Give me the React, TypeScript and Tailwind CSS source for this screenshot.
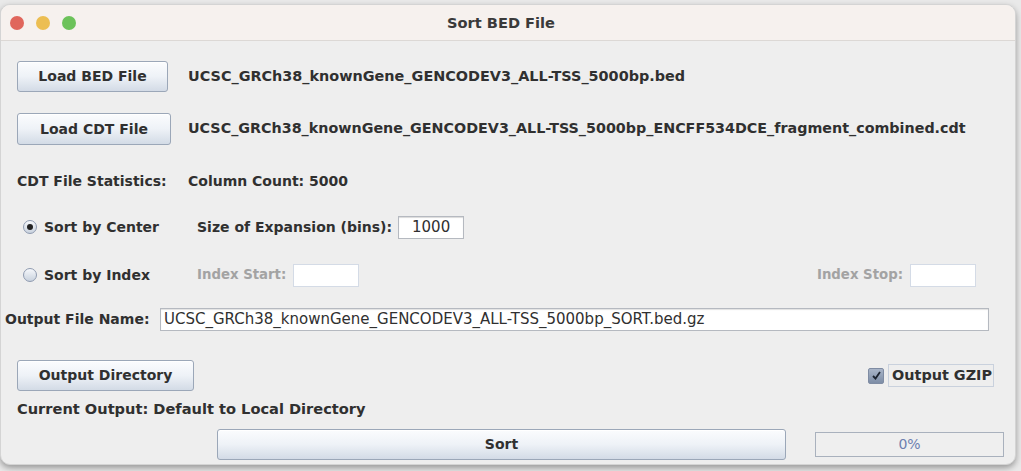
import React from 'react'

const btn =
  'flex items-center justify-center rounded-[3px] border border-[#9ba7b8] bg-gradient-to-b from-[#fbfcfe] via-[#eef2f7] to-[#d3dbe6] text-[14px] font-bold text-[#303030] shadow-[inset_0_1px_0_#ffffff]'

function Radio({ checked }: { checked: boolean }) {
  return (
    <span className="flex h-[14px] w-[14px] items-center justify-center rounded-full border border-[#8f9bb0] bg-gradient-to-b from-[#f6f8fb] to-[#c9d2de]">
      {checked && <span className="h-[6px] w-[6px] rounded-full bg-[#222]" />}
    </span>
  )
}

export default function App() {
  return (
    <div className="h-[471px] w-[1021px] overflow-hidden bg-[#e9e9e9] pt-[4px] font-['DejaVu_Sans',sans-serif] text-[#303030]">
      <div className="flex h-[461px] w-[1016px] flex-col overflow-hidden rounded-[10px] border border-[#d4d4d4] bg-[#eeeeee] shadow-[0_3px_6px_rgba(0,0,0,0.35)]">
        {/* Title bar */}
        <div className="relative flex h-[36px] shrink-0 items-center justify-center border-b border-[#dcd8d5] bg-[#f6f1ee] pr-[14px]">
          <div className="absolute left-[9px] top-[11px] flex gap-[12px]">
            <span className="h-[14px] w-[14px] rounded-full bg-[#e0665c]" />
            <span className="h-[14px] w-[14px] rounded-full bg-[#ecbe52]" />
            <span className="h-[14px] w-[14px] rounded-full bg-[#6cc25a]" />
          </div>
          <span className="text-[14.6px] font-bold text-[#3a3a3a]">Sort BED File</span>
        </div>

        {/* Body */}
        <div className="flex flex-col pt-[20px] text-[14px] font-bold">
          <div className="flex h-[31px] items-center pl-[16px]">
            <div className={`${btn} h-[31px] w-[151px]`}>Load BED File</div>
            <span className="ml-[20px] text-[14.4px]">UCSC_GRCh38_knownGene_GENCODEV3_ALL-TSS_5000bp.bed</span>
          </div>

          <div className="mt-[21px] flex h-[32px] items-center pl-[16px]">
            <div className={`${btn} h-[32px] w-[154px]`}>Load CDT File</div>
            <span className="ml-[17px] text-[14.3px]">UCSC_GRCh38_knownGene_GENCODEV3_ALL-TSS_5000bp_ENCFF534DCE_fragment_combined.cdt</span>
          </div>

          <div className="mt-[26px] flex h-[20px] items-center pl-[16px]">
            <span className="w-[171px]">CDT File Statistics:</span>
            <span>Column Count: 5000</span>
          </div>

          <div className="mt-[24px] flex h-[24px] items-center pl-[22px]">
            <Radio checked />
            <span className="ml-[7px] w-[153px]">Sort by Center</span>
            <span>Size of Expansion (bins):</span>
            <div className="ml-[6px] flex h-[23px] w-[66px] items-center justify-center border border-[#b5b9c0] bg-white text-[15px] font-normal shadow-[inset_0_1px_1px_rgba(0,0,0,0.15)]">
              1000
            </div>
          </div>

          <div className="mt-[24px] flex h-[24px] items-center pl-[22px]">
            <Radio checked={false} />
            <span className="ml-[7px] w-[153px]">Sort by Index</span>
            <span className="text-[13.3px] text-[#a3a3a3]">Index Start:</span>
            <div className="ml-[7px] h-[23px] w-[66px] border border-[#d4dbe6] bg-white" />
            <span className="ml-auto text-[13.3px] text-[#a3a3a3]">Index Stop:</span>
            <div className="ml-[7px] mr-[39px] h-[23px] w-[66px] border border-[#d4dbe6] bg-white" />
          </div>

          <div className="mt-[20px] flex h-[24px] items-center pl-[4px]">
            <span className="w-[155px]">Output File Name:</span>
            <div className="flex h-[23px] w-[829px] items-center border border-[#b5b9c0] bg-white pl-[3px] text-[15px] font-normal shadow-[inset_0_1px_1px_rgba(0,0,0,0.12)]">
              UCSC_GRCh38_knownGene_GENCODEV3_ALL-TSS_5000bp_SORT.bed.gz
            </div>
          </div>

          <div className="mt-[29px] flex h-[31px] items-center pl-[16px]">
            <div className={`${btn} h-[31px] w-[177px]`}>Output Directory</div>
            <div className="ml-auto mr-[21px] flex items-center">
              <span className="flex h-[16px] w-[16px] items-center justify-center rounded-[2px] border border-[#7f8ca3] bg-gradient-to-b from-[#a9b5c8] to-[#7d8da6]">
                <svg width="11" height="11" viewBox="0 0 11 11">
                  <path d="M2 6 L4.5 8.5 L9 2" fill="none" stroke="#1c2430" strokeWidth="1.8" />
                </svg>
              </span>
              <span className="ml-[4px] flex h-[23px] items-center border border-[#c9d1dd] pl-[3px] pr-[1px] text-[14.4px]">Output GZIP</span>
            </div>
          </div>

          <div className="mt-[8px] flex h-[20px] items-center pl-[16px]">
            <span className="text-[14.6px]">Current Output: Default to Local Directory</span>
          </div>

          <div className="mt-[10px] flex h-[31px] items-center pl-[216px]">
            <div className={`${btn} h-[31px] w-[569px]`}>Sort</div>
            <div className="ml-[29px] flex h-[25px] w-[189px] items-center justify-center border border-[#a9b1bd] bg-[#efefef] text-[14px] font-normal text-[#6d7fb0]">
              0%
            </div>
          </div>
        </div>
      </div>
    </div>
  )
}
